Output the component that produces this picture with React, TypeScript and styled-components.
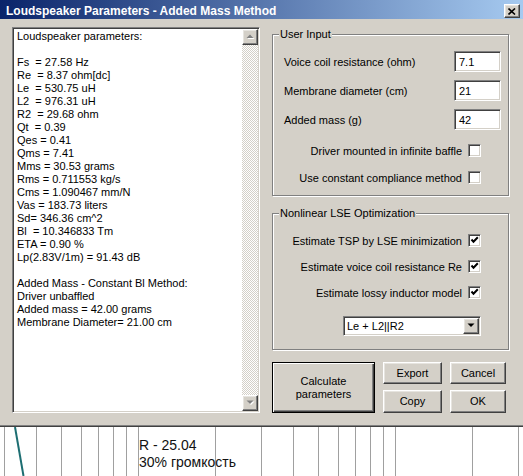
import styled, { createGlobalStyle, css } from 'styled-components';

const GlobalStyle = createGlobalStyle`
  html, body {
    margin: 0;
    padding: 0;
    background: #fff;
  }
  body {
    width: 523px;
    height: 476px;
    overflow: hidden;
    font-family: "Liberation Sans", Arial, sans-serif;
    font-size: 11px;
    color: #000;
  }
`;

const raised = css`
  border: 1px solid;
  border-color: #fff #404040 #404040 #fff;
  box-shadow: inset -1px -1px 0 #808080, inset 1px 1px 0 #e6e4df;
  background: #d4d0c8;
`;

const sunken = css`
  border: 1px solid;
  border-color: #808080 #fff #fff #808080;
  box-shadow: inset 1px 1px 0 #404040, inset -1px -1px 0 #d4d0c8;
  background: #fff;
`;

const Window = styled.div`
  background: #d4d0c8;
  border-bottom: 1px solid #404040;
  box-shadow: inset 0 -1px 0 #808080;
  display: flex;
  flex-direction: column;
`;

const TitleBar = styled.div`
  height: 16px;
  padding: 3px 3px 0 6px;
  display: flex;
  align-items: center;
  justify-content: space-between;
  background: linear-gradient(to right, #0a246a, #a6caf0);
  color: #fff;
  font-weight: bold;
  font-size: 12px;
`;

const CloseButton = styled.div`
  ${raised};
  width: 14px;
  height: 12px;
  display: flex;
  align-items: center;
  justify-content: center;
`;

const Body = styled.div`
  display: flex;
  align-items: flex-start;
  gap: 12px;
  padding: 8px 0 13px 12px;
`;

const TextBox = styled.div`
  ${sunken};
  box-sizing: border-box;
  width: 248px;
  height: 386px;
  padding: 1px;
  display: flex;
`;

const TextContent = styled.pre`
  margin: 0;
  flex: 1;
  padding: 1px 3px;
  font-family: "Liberation Sans", Arial, sans-serif;
  font-size: 11px;
  line-height: 13px;
  white-space: pre;
  overflow: hidden;
`;

const ScrollBar = styled.div`
  width: 16px;
  display: flex;
  flex-direction: column;
  justify-content: space-between;
  background-color: #fff;
  background-image: conic-gradient(#d4d0c8 25%, #fff 0 50%, #d4d0c8 0 75%, #fff 0);
  background-size: 2px 2px;
`;

const ScrollButton = styled.div`
  ${raised};
  box-sizing: border-box;
  width: 16px;
  height: 16px;
  display: flex;
  align-items: center;
  justify-content: center;
`;

const RightColumn = styled.div`
  width: 237px;
  margin-top: 1px;
  display: flex;
  flex-direction: column;
  gap: 11px;
`;

const Group = styled.fieldset`
  margin: 0;
  padding: 0;
  min-width: 0;
  border: 1px solid #808080;
  box-shadow: inset 1px 1px 0 #fff, 1px 1px 0 #fff;
`;

const Legend = styled.legend`
  margin-left: 6px;
  padding: 0 1px;
  line-height: 13px;
  font-size: 11px;
  background: #d4d0c8;
`;

const GroupBody = styled.div<{ $pt: number; $pb: number; $gap: number }>`
  display: flex;
  flex-direction: column;
  gap: ${(p) => p.$gap}px;
  padding: ${(p) => p.$pt}px 0 ${(p) => p.$pb}px;
`;

const InputRow = styled.div`
  height: 21px;
  display: flex;
  align-items: center;
  justify-content: space-between;
  padding: 0 7px 0 11px;
`;

const TextInput = styled.div`
  ${sunken};
  box-sizing: border-box;
  width: 47px;
  height: 21px;
  padding: 0 4px;
  display: flex;
  align-items: center;
  font-size: 11px;
`;

const CheckRow = styled.div<{ $mt?: number }>`
  height: 13px;
  margin-top: ${(p) => p.$mt ?? 0}px;
  display: flex;
  align-items: center;
  justify-content: flex-end;
  gap: 6px;
  padding-right: 27px;
`;

const CheckBox = styled.div`
  ${sunken};
  box-sizing: border-box;
  width: 13px;
  height: 13px;
  display: flex;
`;

const SelectRow = styled.div`
  margin-top: 4px;
  display: flex;
  justify-content: flex-end;
  padding-right: 27px;
`;

const Select = styled.div`
  ${sunken};
  box-sizing: border-box;
  width: 138px;
  height: 20px;
  padding: 1px;
  display: flex;
  align-items: center;
`;

const SelectText = styled.span`
  flex: 1;
  padding-left: 2px;
  font-size: 11px;
`;

const ButtonGrid = styled.div`
  margin-top: 1px;
  display: grid;
  grid-template-columns: 103px 59px 56px;
  grid-template-rows: 22px 23px;
  column-gap: 8px;
  row-gap: 6px;
`;

const Button = styled.div<{ $default?: boolean }>`
  ${raised};
  box-sizing: border-box;
  display: flex;
  align-items: center;
  justify-content: center;
  text-align: center;
  font-size: 11px;
  line-height: 13px;
  ${(p) =>
    p.$default &&
    css`
      grid-row: span 2;
      border: 1px solid #000;
      box-shadow: inset 1px 1px 0 #fff, inset -1px -1px 0 #404040, inset -2px -2px 0 #808080;
    `}
`;

const Chart = styled.div`
  position: relative;
  height: 49px;
  background: #fff;
`;

const ChartGrid = styled.svg`
  position: absolute;
  left: 0;
  top: 0;
`;

const ChartLabel = styled.div`
  position: relative;
  padding: 10px 0 0 139px;
  font-family: "Liberation Sans", Arial, sans-serif;
  font-size: 14px;
  line-height: 17px;
  color: #111;
`;

const report = `Loudspeaker parameters:

Fs  = 27.58 Hz
Re  = 8.37 ohm[dc]
Le  = 530.75 uH
L2  = 976.31 uH
R2  = 29.68 ohm
Qt  = 0.39
Qes = 0.41
Qms = 7.41
Mms = 30.53 grams
Rms = 0.711553 kg/s
Cms = 1.090467 mm/N
Vas = 183.73 liters
Sd= 346.36 cm^2
Bl  = 10.346833 Tm
ETA = 0.90 %
Lp(2.83V/1m) = 91.43 dB

Added Mass - Constant Bl Method:
Driver unbaffled
Added mass = 42.00 grams
Membrane Diameter= 21.00 cm`;

const inputs = [
  { label: 'Voice coil resistance (ohm)', value: '7.1' },
  { label: 'Membrane diameter (cm)', value: '21' },
  { label: 'Added mass (g)', value: '42' },
];

const options = [
  'Estimate TSP by LSE minimization',
  'Estimate voice coil resistance Re',
  'Estimate lossy inductor model',
];

// log-frequency grid of the plot behind the dialog
const gridValues = [0.3, 0.4, 0.5, 0.6, 0.7, 0.8, 0.9, 1, 2, 3, 4, 5, 6, 7, 8, 9, 10, 20, 30];
const gridX = gridValues.map((v) => Math.round(138 + 257 * Math.log10(v)) + 0.5);

function Arrow({ down, disabled }: { down?: boolean; disabled?: boolean }) {
  const pts = down ? '0,0 7,0 3.5,3.5' : '0,3.5 7,3.5 3.5,0';
  return (
    <svg width="9" height="6" viewBox="0 0 9 6">
      {disabled && <polygon points={pts} fill="#fff" transform="translate(1.5 1.5)" />}
      <polygon points={pts} fill={disabled ? '#808080' : '#000'} transform="translate(0.5 0.5)" />
    </svg>
  );
}

function Check({ checked }: { checked?: boolean }) {
  return (
    <CheckBox>
      {checked && (
        <svg width="11" height="11" viewBox="0 0 11 11">
          <path d="M2.5 4.5 L4.5 6.8 L8.8 2.3" stroke="#000" strokeWidth="2" fill="none" />
        </svg>
      )}
    </CheckBox>
  );
}

export default function App() {
  return (
    <>
      <GlobalStyle />
      <Window>
        <TitleBar>
          <span>Loudspeaker Parameters - Added Mass Method</span>
          <CloseButton>
            <svg width="8" height="7" viewBox="0 0 8 7">
              <path d="M0.5 0.5 L7 6.5 M7 0.5 L0.5 6.5" stroke="#000" strokeWidth="1.6" />
            </svg>
          </CloseButton>
        </TitleBar>
        <Body>
          <TextBox>
            <TextContent>{report}</TextContent>
            <ScrollBar>
              <ScrollButton>
                <Arrow disabled />
              </ScrollButton>
              <ScrollButton>
                <Arrow down disabled />
              </ScrollButton>
            </ScrollBar>
          </TextBox>
          <RightColumn>
            <Group>
              <Legend>User Input</Legend>
              <GroupBody $pt={10} $pb={11} $gap={8}>
                {inputs.map((i) => (
                  <InputRow key={i.label}>
                    <span>{i.label}</span>
                    <TextInput>{i.value}</TextInput>
                  </InputRow>
                ))}
                <CheckRow $mt={6}>
                  <span>Driver mounted in infinite baffle</span>
                  <Check />
                </CheckRow>
                <CheckRow $mt={6}>
                  <span>Use constant compliance method</span>
                  <Check />
                </CheckRow>
              </GroupBody>
            </Group>
            <Group>
              <Legend>Nonlinear LSE Optimization</Legend>
              <GroupBody $pt={14} $pb={13} $gap={13}>
                {options.map((o) => (
                  <CheckRow key={o}>
                    <span>{o}</span>
                    <Check checked />
                  </CheckRow>
                ))}
                <SelectRow>
                  <Select>
                    <SelectText>Le + L2||R2</SelectText>
                    <ScrollButton>
                      <Arrow down />
                    </ScrollButton>
                  </Select>
                </SelectRow>
              </GroupBody>
            </Group>
            <ButtonGrid>
              <Button $default>
                Calculate
                <br />
                parameters
              </Button>
              <Button>Export</Button>
              <Button>Cancel</Button>
              <Button>Copy</Button>
              <Button>OK</Button>
            </ButtonGrid>
          </RightColumn>
        </Body>
      </Window>
      <Chart>
        <ChartGrid width="523" height="49">
          {gridX.map((x) => (
            <line key={x} x1={x} y1={0} x2={x} y2={49} stroke="#a0a0a0" strokeWidth="1" />
          ))}
          <line x1={15} y1={0} x2={23.5} y2={49} stroke="#1d6e72" strokeWidth="2" />
        </ChartGrid>
        <ChartLabel>
          R - 25.04
          <br />
          30% громкость
        </ChartLabel>
      </Chart>
    </>
  );
}
